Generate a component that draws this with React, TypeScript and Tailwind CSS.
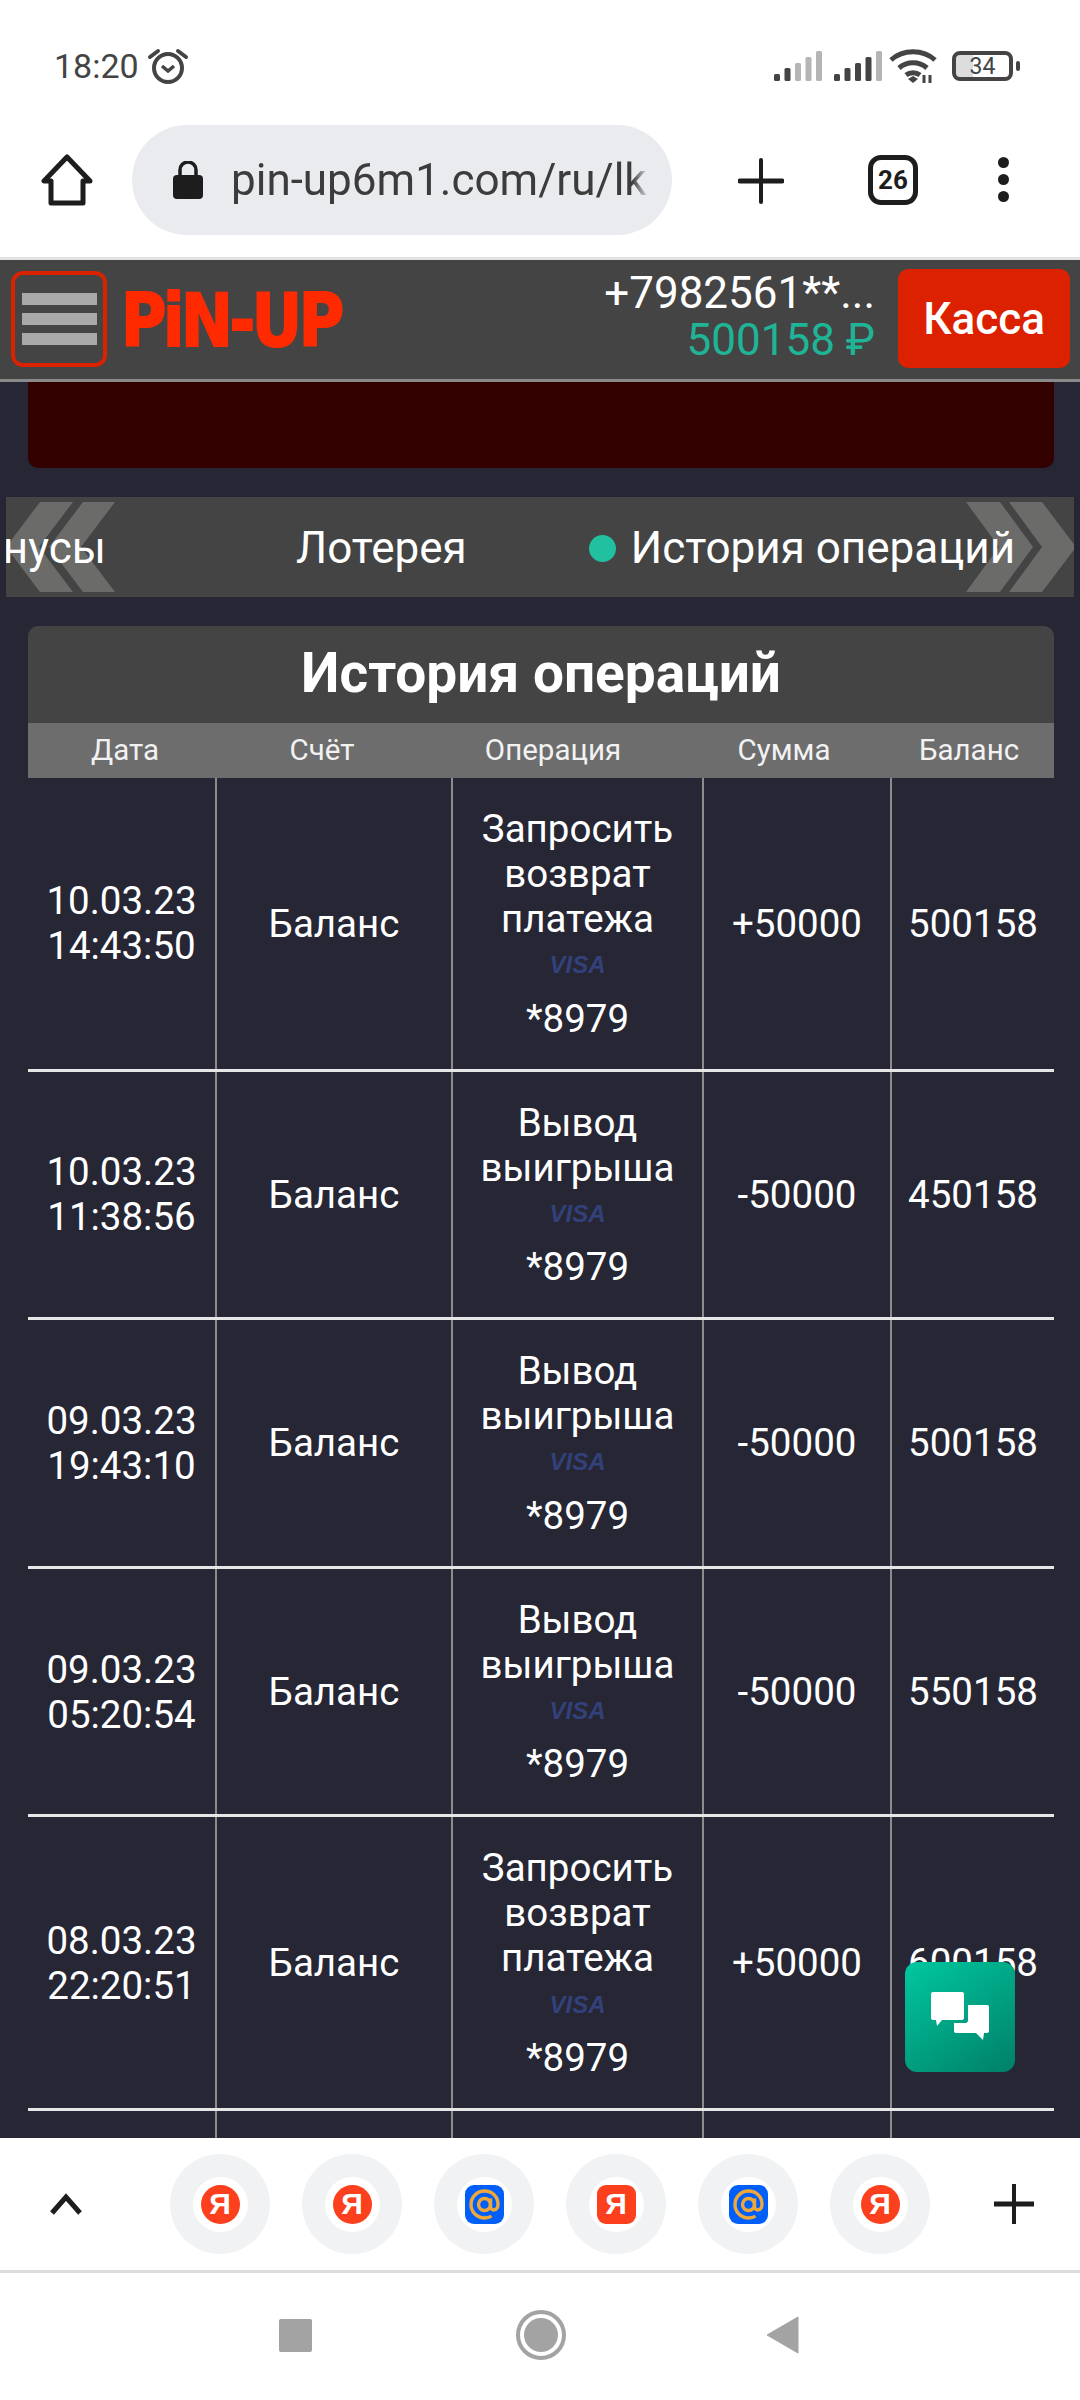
import { ReactNode } from "react";

const rows = [
  { date: "10.03.23", time: "14:43:50", op: ["Запросить", "возврат", "платежа"], sum: "+50000", bal: "500158" },
  { date: "10.03.23", time: "11:38:56", op: ["Вывод", "выигрыша"], sum: "-50000", bal: "450158" },
  { date: "09.03.23", time: "19:43:10", op: ["Вывод", "выигрыша"], sum: "-50000", bal: "500158" },
  { date: "09.03.23", time: "05:20:54", op: ["Вывод", "выигрыша"], sum: "-50000", bal: "550158" },
  { date: "08.03.23", time: "22:20:51", op: ["Запросить", "возврат", "платежа"], sum: "+50000", bal: "600158" },
];

const gridCols = "grid grid-cols-[189px_236px_251px_188px_162px]";

function Signal({ dark }: { dark: number }) {
  const bars = [7, 13, 18, 24, 30];
  return (
    <svg width="48" height="32" viewBox="0 0 48 32">
      {bars.map((h, i) => (
        <rect key={i} x={i * 10.5} y={31 - h} width="6" height={h} rx="1.5" fill={i < dark ? "#444444" : "#b5b5b5"} />
      ))}
    </svg>
  );
}

function StatusBar() {
  return (
    <div className="flex h-[115px] items-start justify-between pl-[54px] pr-[60px] pt-[41px]">
      <div className="flex h-[50px] items-center gap-[8px] text-[34px] text-[#444444]">
        <span>18:20</span>
        <svg width="42" height="40" viewBox="0 0 42 40" fill="none" stroke="#444444" strokeWidth="4">
          <circle cx="21" cy="22" r="14" />
          <path d="M15 20l6 5 6-5" strokeWidth="3.5" />
          <path d="M3 11l8-6M39 11l-8-6" strokeLinecap="round" />
        </svg>
      </div>
      <div className="flex h-[50px] items-center">
        <Signal dark={2} />
        <div className="ml-[12px]">
          <Signal dark={4} />
        </div>
        <svg className="ml-[6px]" width="50" height="36" viewBox="0 0 50 36" fill="none" stroke="#444444" strokeWidth="5">
          <path d="M3 12c12-11 32-11 44 0" />
          <path d="M11 20c8-7 20-7 28 0" />
          <path d="M18 27c4-3 10-3 14 0" />
          <path d="M25 35l-5-4 5-3 5 3z" fill="#444444" stroke="none" />
          <path d="M36 27v8M42 27v8" strokeWidth="3" />
        </svg>
        <div className="ml-[14px] flex h-[30px] w-[61px] items-center justify-center rounded-[8px] border-[4px] border-[#444444] bg-[linear-gradient(90deg,#dddddd_0_32%,#ffffff_32%)] text-[23px] leading-none text-[#444444]">
          34
        </div>
        <div className="ml-[3px] h-[10px] w-[4px] rounded-[2px] bg-[#444444]" />
      </div>
    </div>
  );
}

function BrowserBar() {
  return (
    <div className="flex h-[145px] items-start border-b-[3px] border-[#e3e3e1] pl-[41px]">
      <svg className="mt-[39px]" width="52" height="52" viewBox="0 0 52 52" fill="none" stroke="#1d1d1d" strokeWidth="5" strokeLinejoin="round">
        <path d="M26 3L3 27h7v22h32V27h7z" />
      </svg>
      <div className="ml-[39px] mt-[10px] flex h-[110px] w-[540px] items-center rounded-full bg-[#eaebef] pl-[40px]">
        <svg width="32" height="38" viewBox="0 0 32 38">
          <path d="M8 16V9a8 8 0 0116 0v7" fill="none" stroke="#1d1d1d" strokeWidth="3.5" />
          <rect x="1" y="14" width="30" height="24" rx="4" fill="#1d1d1d" />
        </svg>
        <div className="ml-[27px] w-[418px] overflow-hidden whitespace-nowrap text-[44px] leading-[52px] text-[#3c3c3c] [mask-image:linear-gradient(90deg,#000_96%,transparent)]">
          pin-up6m1.com/ru/lk
        </div>
      </div>
      <svg className="ml-[66px] mt-[43px]" width="46" height="46" viewBox="0 0 46 46" stroke="#1d1d1d" strokeLinecap="round">
        <path d="M23 2v42" strokeWidth="4" />
        <path d="M2 23h42" strokeWidth="5" />
      </svg>
      <div className="ml-[84px] mt-[40px] flex h-[50px] w-[50px] items-center justify-center rounded-[13px] border-[5px] border-[#1d1d1d] text-[26px] font-bold leading-none text-[#1d1d1d]">
        26
      </div>
      <div className="ml-[80px] mt-[42px] flex flex-col gap-[6px]">
        <div className="h-[11px] w-[11px] rounded-full bg-[#1d1d1d]" />
        <div className="h-[11px] w-[11px] rounded-full bg-[#1d1d1d]" />
        <div className="h-[11px] w-[11px] rounded-full bg-[#1d1d1d]" />
      </div>
    </div>
  );
}

function SiteHeader() {
  return (
    <div className="flex h-[122px] items-start border-b-[3px] border-[#8a8a8a] bg-[#444444]">
      <div className="ml-[11px] mt-[11px] flex h-[96px] w-[96px] flex-col items-center justify-center gap-[8px] rounded-[12px] border-[4px] border-[#d92200]">
        <div className="h-[12px] w-[75px] bg-[#a9a9a9]" />
        <div className="h-[12px] w-[75px] bg-[#a9a9a9]" />
        <div className="h-[12px] w-[75px] bg-[#a9a9a9]" />
      </div>
      <div className="ml-[14px] mt-[21px] w-[225px] whitespace-nowrap font-['DejaVu_Sans'] text-[73px] font-bold leading-[80px] tracking-[-4px] text-[#ff2a00] [-webkit-text-stroke:2px_#ff2a00]">
        <span className="inline-block origin-left scale-x-[0.85]">PiN-UP</span>
      </div>
      <div className="ml-auto mt-[10px] flex flex-col items-end text-[44px] leading-[47px]">
        <span className="text-white">+7982561**...</span>
        <span className="text-[#20b497]">500158 ₽</span>
      </div>
      <div className="ml-[23px] mr-[10px] mt-[9px] flex h-[99px] w-[172px] items-center justify-center rounded-[10px] bg-[#dc2100] text-[44px] font-medium text-white">
        Касса
      </div>
    </div>
  );
}

function TabsBar() {
  return (
    <div className="relative mx-[6px] mt-[29px] flex h-[100px] items-center overflow-hidden whitespace-nowrap bg-[#444444] pt-[2px] text-[44px] leading-none text-white">
      <svg className="absolute left-0 top-0" width="1070" height="100" viewBox="0 0 1070 100" fill="#6b6b69">
        <path d="M34 5h33L33 50l34 45H34L0 50z" />
        <path d="M77 5h32L75 50l34 45H77L43 50z" />
        <path d="M960 5h34l33 45-33 45h-34l33-45z" />
        <path d="M1003 5h33l34 45-34 45h-33l33-45z" />
      </svg>
      <span className="relative ml-[-56px] w-[156px]">Бонусы</span>
      <span className="relative ml-[190px]">Лотерея</span>
      <span className="relative ml-[122px] h-[27px] w-[27px] rounded-full bg-[#20c0a0]" />
      <span className="relative ml-[15px]">История операций</span>
    </div>
  );
}

function Cell({ children, last }: { children: ReactNode; last?: boolean }) {
  return (
    <div className={`flex flex-col items-center justify-center text-center ${last ? "" : "border-r-2 border-[#8c8c8c]"}`}>
      {children}
    </div>
  );
}

function HistoryTable() {
  return (
    <div className="ml-[28px] mr-[26px] mt-[29px] text-[38.5px] leading-[45px] text-white">
      <div className="flex h-[97px] items-center justify-center rounded-t-[10px] bg-[#444444] pb-[2px] text-[55px] font-bold">
        История операций
      </div>
      <div className="grid h-[55px] grid-cols-[194px_200px_262px_200px_170px] items-center bg-[#6d6d6d] text-center text-[29.5px] leading-none text-[#f2f2f2]">
        <span>Дата</span>
        <span>Счёт</span>
        <span>Операция</span>
        <span>Сумма</span>
        <span>Баланс</span>
      </div>
      {rows.map((r, i) => (
        <div key={i} className={`${gridCols} border-b-[3px] border-[#e6e6e6]`}>
          <Cell>
            <span>{r.date}</span>
            <span>{r.time}</span>
          </Cell>
          <Cell>Баланс</Cell>
          <Cell>
            <div className="flex flex-col items-center py-[28px]">
              {r.op.map((line) => (
                <span key={line}>{line}</span>
              ))}
              <span className="flex h-[54.6px] items-center pb-[6px] font-['Liberation_Sans'] text-[24px] font-bold italic leading-none text-[#33417a]">
                VISA
              </span>
              <span>*8979</span>
            </div>
          </Cell>
          <Cell>{r.sum}</Cell>
          <Cell last>{r.bal}</Cell>
        </div>
      ))}
      <div className={`${gridCols} h-[40px]`}>
        <Cell>{null}</Cell>
        <Cell>{null}</Cell>
        <Cell>{null}</Cell>
        <Cell>{null}</Cell>
        <Cell last>{null}</Cell>
      </div>
    </div>
  );
}

function YaIcon({ square }: { square?: boolean }) {
  return (
    <div className={`flex h-[39px] w-[39px] items-center justify-center bg-[#fc3f1d] font-['Liberation_Sans'] text-[30px] font-bold leading-none text-white ${square ? "rounded-[9px]" : "rounded-full"}`}>
      Я
    </div>
  );
}

function MailIcon() {
  return (
    <div className="flex h-[39px] w-[39px] items-center justify-center rounded-[9px] bg-[#005ff9]">
      <svg width="33" height="33" viewBox="0 0 33 33" fill="none" stroke="#f0a73a" strokeWidth="3.4">
        <circle cx="16.5" cy="16.5" r="6" />
        <path d="M22.5 10.5v8c0 5 7.5 5 7.5-2.5C30 8.5 24 3 16.5 3S3 9 3 16.5 9 30 16.5 30c3 0 5-.5 7-2" />
      </svg>
    </div>
  );
}

function Chip({ children }: { children: ReactNode }) {
  return (
    <div className="flex h-[100px] w-[100px] items-center justify-center rounded-full bg-[#f1f2f4]">
      <div className="flex h-[55px] w-[55px] items-center justify-center rounded-full bg-white">{children}</div>
    </div>
  );
}

function BookmarksBar() {
  return (
    <div className="flex h-[135px] items-start border-b-[3px] border-[#dcdddb] bg-white pt-[16px]">
      <div className="flex h-[100px] w-[170px] items-center pl-[49px]">
        <svg width="34" height="22" viewBox="0 0 34 22" fill="none" stroke="#1d1d1d" strokeWidth="5">
          <path d="M3 20L17 4l14 16" />
        </svg>
      </div>
      <div className="flex gap-[32px]">
        <Chip><YaIcon /></Chip>
        <Chip><YaIcon /></Chip>
        <Chip><MailIcon /></Chip>
        <Chip><YaIcon square /></Chip>
        <Chip><MailIcon /></Chip>
        <Chip><YaIcon /></Chip>
      </div>
      <svg className="ml-[64px] mt-[30px]" width="40" height="40" viewBox="0 0 40 40" stroke="#1d1d1d">
        <path d="M20 0v40" strokeWidth="4" />
        <path d="M0 20h40" strokeWidth="5" />
      </svg>
    </div>
  );
}

function NavBar() {
  return (
    <div className="flex h-[127px] items-center bg-white pb-[3px]">
      <div className="ml-[279px] h-[33px] w-[33px] rounded-[2px] bg-[#a3a3a3]" />
      <div className="ml-[204px] flex h-[50px] w-[50px] items-center justify-center rounded-full border-[4px] border-[#a3a3a3]">
        <div className="h-[34px] w-[34px] rounded-full bg-[#a3a3a3]" />
      </div>
      <svg className="ml-[200px]" width="33" height="38" viewBox="0 0 33 38">
        <path d="M32 1v36L1 19z" fill="#a3a3a3" stroke="#a3a3a3" strokeLinejoin="round" />
      </svg>
    </div>
  );
}

export default function App() {
  return (
    <div className="relative flex h-[2400px] w-[1080px] flex-col overflow-hidden bg-white font-['Roboto',sans-serif]">
      <StatusBar />
      <BrowserBar />
      <SiteHeader />
      <main className="min-h-0 flex-1 overflow-hidden bg-[#262635]">
        <div className="ml-[28px] mr-[26px] h-[86px] rounded-b-[10px] bg-[#330000]" />
        <TabsBar />
        <HistoryTable />
      </main>
      <BookmarksBar />
      <NavBar />
      <div className="absolute left-[905px] top-[1962px] flex h-[110px] w-[110px] items-center justify-center rounded-[12px] bg-[linear-gradient(145deg,#00c89f,#007f68)]">
        <svg width="58" height="50" viewBox="0 0 58 50" fill="white">
          <path d="M2 0h29a2 2 0 012 2v24a2 2 0 01-2 2H11l-5 6-1-6H2a2 2 0 01-2-2V2a2 2 0 012-2z" />
          <path d="M37 13h19a2 2 0 012 2v24a2 2 0 01-2 2h-3l-1 7-7-7H25a2 2 0 01-2-2v-8h12a3 3 0 002-2z" />
        </svg>
      </div>
    </div>
  );
}
